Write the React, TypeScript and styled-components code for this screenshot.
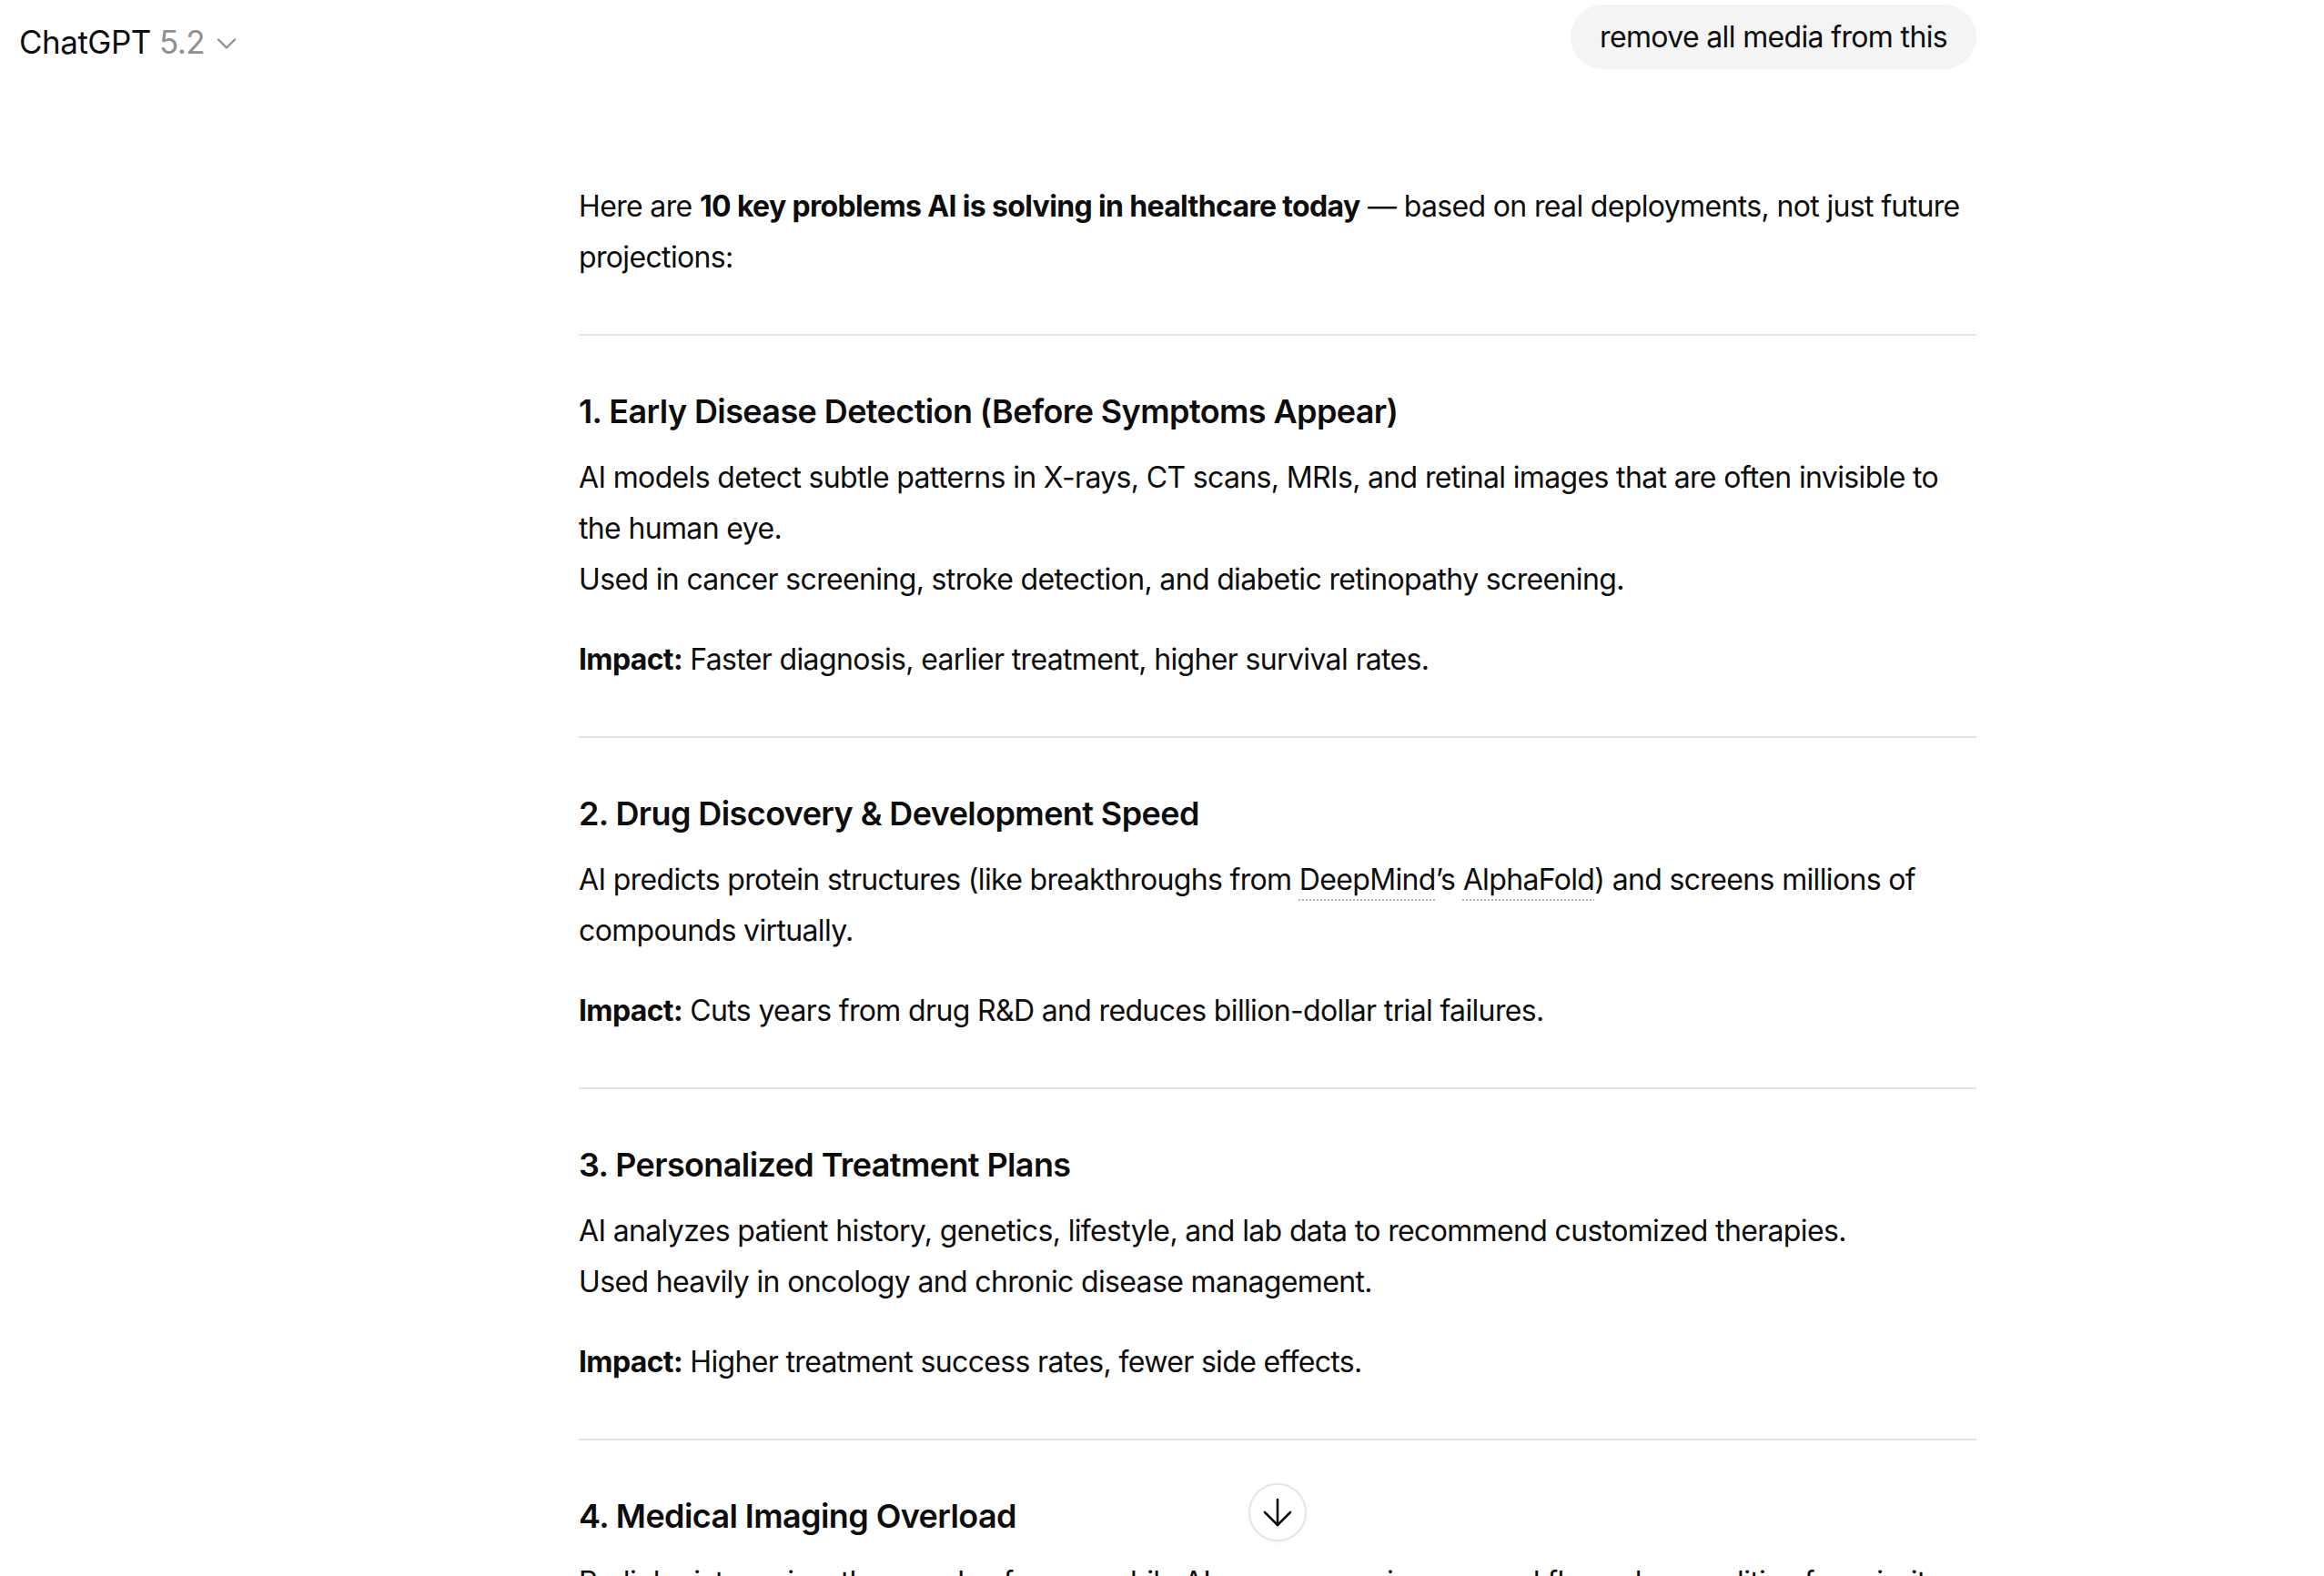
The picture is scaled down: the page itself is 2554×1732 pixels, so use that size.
import React from "react";
import styled, { createGlobalStyle } from "styled-components";
import { ArrowDown, ChevronDown } from "lucide-react";

const Global = createGlobalStyle`
  html, body {
    margin: 0;
    padding: 0;
    background: #ffffff;
  }
  body {
    font-family: Inter, "Noto Sans", "Liberation Sans", sans-serif;
    color: #0d0d0d;
    -webkit-font-smoothing: antialiased;
  }
`;

const Shell = styled.div`
  position: relative;
  height: 1732px;
  overflow: hidden;
  background: #fff;
`;

const Header = styled.header`
  position: absolute;
  top: 0;
  left: 0;
  height: 92px;
  display: flex;
  align-items: center;
  padding-left: 21px;
  z-index: 2;
`;

const ModelName = styled.div`
  display: flex;
  align-items: center;
  font-size: 35px;
  line-height: 44px;
  letter-spacing: -0.5px;
  color: #0d0d0d;
`;

const Version = styled.span`
  color: #8f8f8f;
  margin-left: 9px;
`;

const Chevron = styled(ChevronDown)`
  margin-left: 6px;
  margin-top: 4px;
  color: #8f8f8f;
`;

const Main = styled.main`
  position: relative;
  height: 100%;
  padding-left: 254px;
`;

const Column = styled.div`
  width: 1536px;
  margin: 0 auto;
`;

const UserRow = styled.div`
  display: flex;
  justify-content: flex-end;
  padding-top: 5px;
`;

const Bubble = styled.div`
  background: #f4f4f4;
  border-radius: 36px;
  padding: 12px 32px;
  font-size: 32px;
  line-height: 47px;
  letter-spacing: -0.65px;
`;

const Answer = styled.div`
  margin-top: 123px;
  font-size: 32px;
  line-height: 56px;
  letter-spacing: -0.65px;
`;

const P = styled.p`
  margin: 0;
  & + & {
    margin-top: 32px;
  }
`;

const Rule = styled.hr`
  border: 0;
  height: 2px;
  background: #e3e3e3;
  margin: 56px 0 55px;
`;

const H3 = styled.h3`
  margin: 0 0 17px;
  font-size: 36px;
  line-height: 56px;
  font-weight: 600;
  letter-spacing: -0.6px;
`;

const Entity = styled.span`
  text-decoration: underline dotted #b4b4b4;
  text-decoration-thickness: 2px;
  text-underline-offset: 10px;
`;

const ScrollButton = styled.button`
  position: absolute;
  left: calc(254px + (100% - 254px) / 2 - 32px);
  bottom: 38px;
  width: 64px;
  height: 64px;
  border-radius: 50%;
  border: 2px solid #e6e6e6;
  background: #fff;
  display: flex;
  align-items: center;
  justify-content: center;
  padding: 0;
  color: #0d0d0d;
  box-shadow: 0 2px 6px rgba(0, 0, 0, 0.03);
`;

type Section = {
  title: string;
  body: React.ReactNode;
  impact?: string;
};

const sections: Section[] = [
  {
    title: "1. Early Disease Detection (Before Symptoms Appear)",
    body: (
      <>
        AI models detect subtle patterns in X-rays, CT scans, MRIs, and retinal images that are often invisible to the human eye.
        <br />
        Used in cancer screening, stroke detection, and diabetic retinopathy screening.
      </>
    ),
    impact: "Faster diagnosis, earlier treatment, higher survival rates.",
  },
  {
    title: "2. Drug Discovery & Development Speed",
    body: (
      <>
        AI predicts protein structures (like breakthroughs from <Entity>DeepMind</Entity>’s <Entity>AlphaFold</Entity>) and screens millions of compounds virtually.
      </>
    ),
    impact: "Cuts years from drug R&D and reduces billion-dollar trial failures.",
  },
  {
    title: "3. Personalized Treatment Plans",
    body: (
      <>
        AI analyzes patient history, genetics, lifestyle, and lab data to recommend customized therapies.
        <br />
        Used heavily in oncology and chronic disease management.
      </>
    ),
    impact: "Higher treatment success rates, fewer side effects.",
  },
  {
    title: "4. Medical Imaging Overload",
    body: (
      <>
        Radiologists review thousands of scans while AI pre-screens images and flags abnormalities for priority review.
      </>
    ),
  },
];

export default function App() {
  return (
    <>
      <Global />
      <Shell>
        <Header>
          <ModelName>
            ChatGPT<Version>5.2</Version>
            <Chevron size={36} strokeWidth={1.5} />
          </ModelName>
        </Header>
        <Main>
          <Column>
            <UserRow>
              <Bubble>remove all media from this</Bubble>
            </UserRow>
            <Answer>
              <P>
                Here are <strong>10 key problems AI is solving in healthcare today</strong> — based on real deployments, not just future projections:
              </P>
              {sections.map((s) => (
                <React.Fragment key={s.title}>
                  <Rule />
                  <H3>{s.title}</H3>
                  <P>{s.body}</P>
                  {s.impact && (
                    <P>
                      <strong>Impact:</strong> {s.impact}
                    </P>
                  )}
                </React.Fragment>
              ))}
            </Answer>
          </Column>
          <ScrollButton aria-label="Scroll to bottom">
            <ArrowDown size={48} strokeWidth={1.3} />
          </ScrollButton>
        </Main>
      </Shell>
    </>
  );
}
